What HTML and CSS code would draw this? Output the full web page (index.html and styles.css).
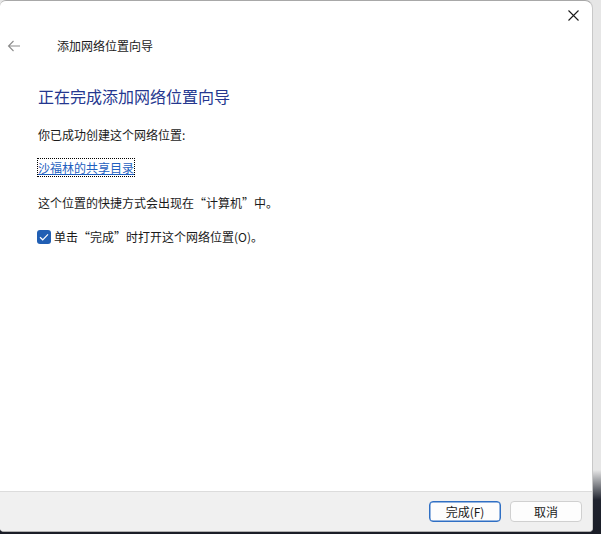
FILE: index.html
```html
<!DOCTYPE html>
<html lang="zh-CN">
<head>
<meta charset="utf-8">
<title>添加网络位置向导</title>
<link rel="stylesheet" href="styles.css">
</head>
<body>
<div class="window">
  <div class="titlebar">
    <button class="close" aria-label="关闭">
      <svg width="11" height="11" viewBox="0 0 11 11"><path d="M0.5 0.5 L10.5 10.5 M10.5 0.5 L0.5 10.5" stroke="#1a1a1a" stroke-width="1.1" fill="none"/></svg>
    </button>
  </div>
  <div class="nav">
    <span class="back">
      <svg width="14" height="12" viewBox="0 0 14 12"><path d="M13 6 H1.5 M6.5 1 L1.5 6 L6.5 11" stroke="#8c8c8c" stroke-width="1.1" fill="none"/></svg>
    </span>
    <span class="wizard-title">添加网络位置向导</span>
  </div>
  <div class="content">
    <h1 class="heading">正在完成添加网络位置向导</h1>
    <p class="line line-first">你已成功创建这个网络位置:</p>
    <p class="line line-link"><a class="link" href="#">沙福林的共享目录</a></p>
    <p class="line line-note">这个位置的快捷方式会出现在“计算机”中。</p>
    <label class="check-row">
      <span class="checkbox">
        <svg width="10" height="8" viewBox="0 0 10 8"><path d="M1 4.2 L3.7 6.8 L9 1.3" stroke="#fff" stroke-width="1.2" fill="none"/></svg>
      </span>
      <span>单击“完成”时打开这个网络位置(O)。</span>
    </label>
  </div>
  <div class="footer">
    <button class="btn btn-primary">完成(F)</button>
    <button class="btn">取消</button>
  </div>
</div>
</body>
</html>
```
FILE: styles.css
```css
html {
  height: 100%;
  background: linear-gradient(to bottom, #e6e6e6 0, #e6e6e6 470px, #20242f 500px, #1a1d27 100%);
}

body {
  margin: 0;
  height: 534px;
  font-family: "Noto Sans CJK SC", "Noto Sans", sans-serif;
  font-size: 12px;
  color: #1a1a1a;
  overflow: hidden;
}

.window {
  width: 593px;
  height: 532px;
  box-sizing: border-box;
  background: #ffffff;
  border-top: 1px solid #a8a8a8;
  border-right: 1px solid #c8c8c8;
  border-bottom: 1px solid #b0b0b0;
  border-radius: 6px 8px 4px 4px;
  display: flex;
  flex-direction: column;
  overflow: hidden;
}

.titlebar {
  height: 29px;
  display: flex;
  justify-content: flex-end;
  align-items: center;
}

.close {
  width: 40px;
  height: 29px;
  border: 0;
  background: transparent;
  padding: 0 0 0 2px;
  display: flex;
  align-items: center;
  justify-content: center;
}

.nav {
  height: 32px;
  display: flex;
  align-items: center;
}

.back {
  width: 14px;
  height: 12px;
  margin-left: 7px;
  display: flex;
}

.wizard-title {
  margin-left: 36px;
  line-height: 18px;
}

.content {
  padding-left: 38px;
  display: flex;
  flex-direction: column;
  align-items: flex-start;
}

.heading {
  margin: 24px 0 0 0;
  font-size: 16px;
  font-weight: normal;
  line-height: 20px;
  color: #25378f;
}

.line {
  margin: 0;
  line-height: 18px;
}

.line-first { margin-top: 20px; }
.line-link { margin-top: 15px; }
.line-note { margin-top: 17px; }

.link {
  color: #1f5fc0;
  text-decoration: underline;
  outline: 1px dotted #000;
  outline-offset: 0;
  display: inline-block;
  line-height: 17px;
}

.check-row {
  margin-top: 16px;
  display: flex;
  align-items: center;
  gap: 3px;
  line-height: 18px;
  margin-left: -1px;
}

.checkbox {
  width: 14px;
  height: 14px;
  border-radius: 3px;
  background: #215fb4;
  display: flex;
  align-items: center;
  justify-content: center;
}

.footer {
  margin-top: auto;
  height: 40px;
  box-sizing: border-box;
  background: #f0f0f0;
  border-top: 1px solid #dcdcdc;
  display: flex;
  justify-content: flex-end;
  align-items: flex-start;
  padding: 9px 10px 0 0;
  gap: 9px;
}

.btn {
  width: 72px;
  height: 21px;
  box-sizing: border-box;
  border: 1px solid #d0d0d0;
  border-radius: 4px;
  background: #fdfdfd;
  font-family: "Noto Sans CJK SC", "Noto Sans", sans-serif;
  font-size: 12px;
  color: #1a1a1a;
  padding: 0;
  line-height: 18px;
}

.btn-primary {
  border: 1px solid #2f6fc4;
  box-shadow: inset 0 0 0 0.5px #2f6fc4;
}
```
